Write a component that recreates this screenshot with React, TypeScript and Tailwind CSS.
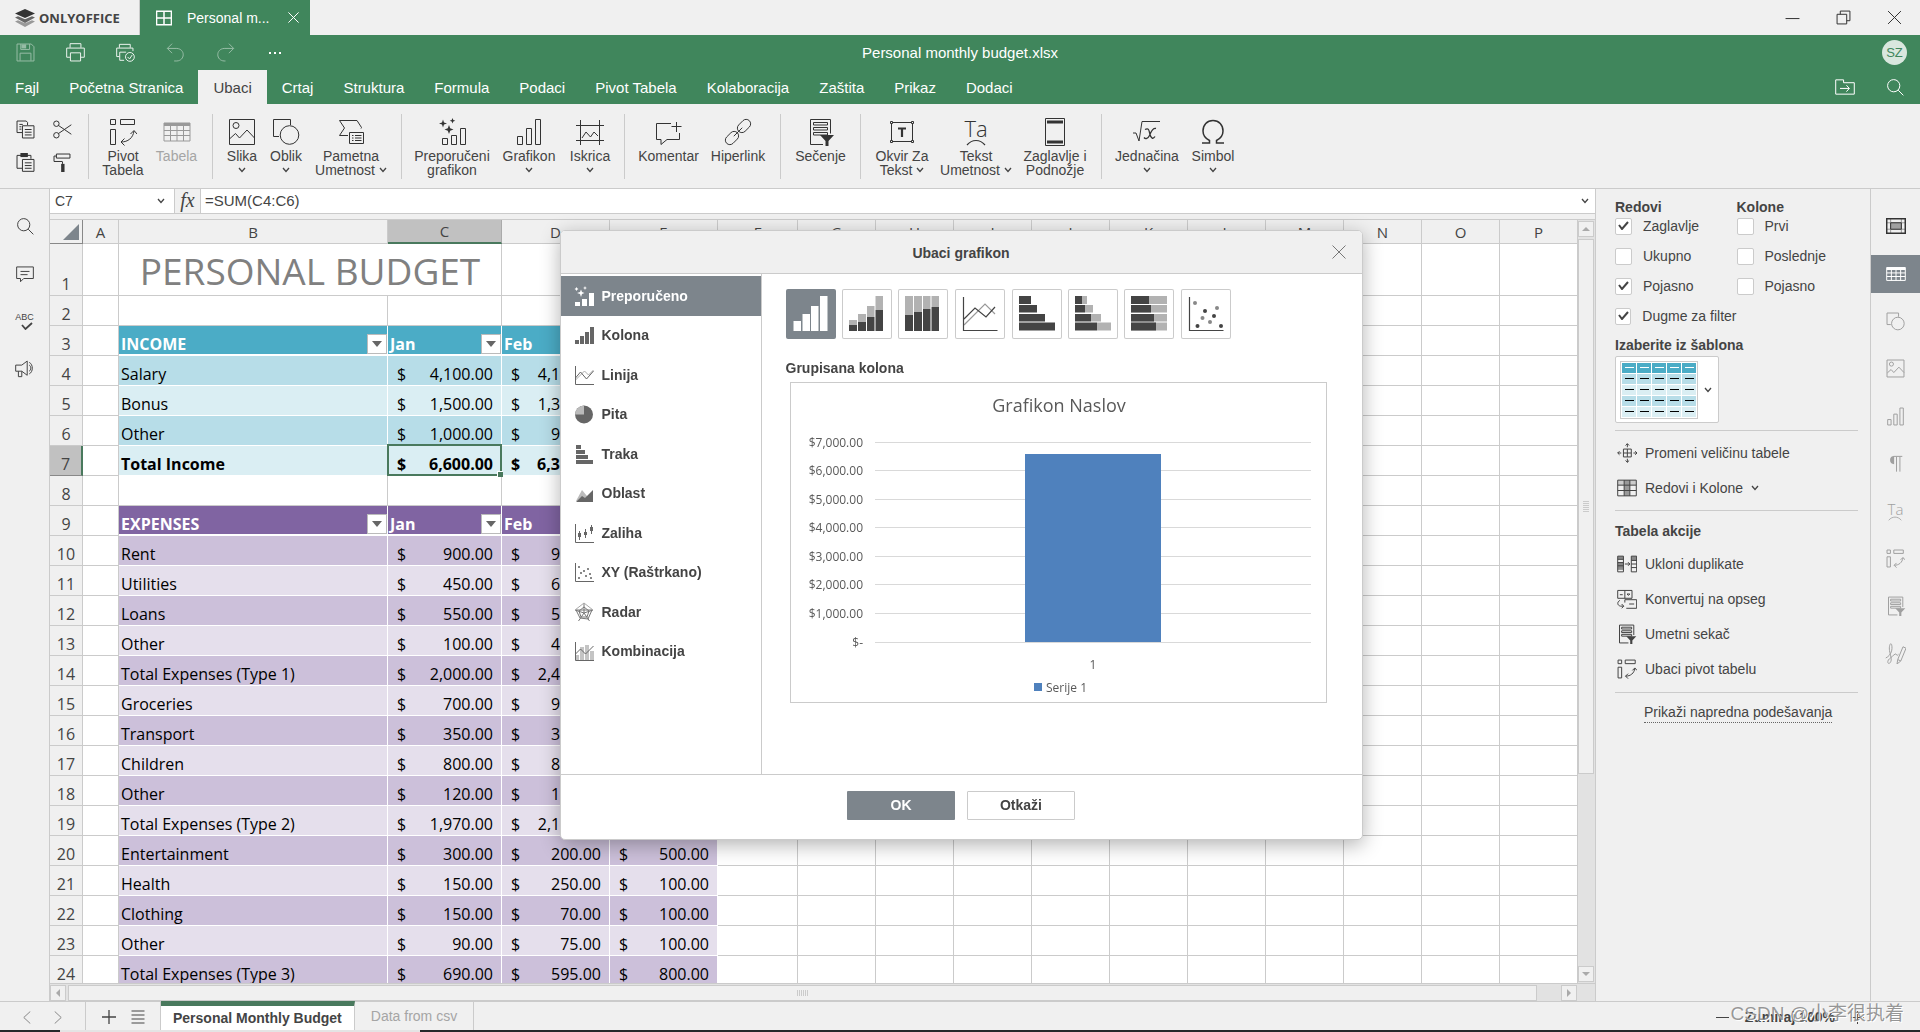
import { useState } from "react";
import type { ReactNode } from "react";

const UI_FONT = "font-['Liberation_Sans',Arial,sans-serif]";
const CELL_FONT = "font-['Open_Sans','Noto_Sans',sans-serif]";

/* ---------- icons ---------- */

interface IconProps {
    size?: number;
    box?: number;
    children: ReactNode;
}

const Icon = ({ size = 28, box = 28, children }: IconProps) => (
    <svg
        width={size}
        height={size}
        viewBox={`0 0 ${box} ${box}`}
        fill="none"
        stroke="currentColor"
        strokeWidth={1}
        className="shrink-0 [&_*]:[vector-effect:non-scaling-stroke]"
        aria-hidden="true"
    >
        {children}
    </svg>
);

const Chevron = () => (
    <svg width="8" height="6" viewBox="0 0 8 6" fill="none" stroke="#444" strokeWidth="1.3" aria-hidden="true">
        <path d="M1 1l3 3.5L7 1" />
    </svg>
);

const pivot = (
    <>
        <rect x="1.500" y="1.500" width="5" height="5" />
        <rect x="11.500" y="1.500" width="14" height="5" />
        <rect x="1.500" y="11.500" width="5" height="15" />
        <path d="M12 24c7 0 12-4 13-11M21.500 16l3.500-3.500 3 3.500M15.500 20.500L12 24l3.500 3.500" />
    </>
);
const tableGrid = (
    <>
        <rect x="1" y="5" width="26" height="18" />
        <path d="M1 6h26M1 7h26" strokeWidth="2" />
        <path d="M1 12.500h26M1 17.500h26M7.500 8v15M14 8v15M20.500 8v15" />
    </>
);
const image = (
    <>
        <rect x="1.500" y="1.500" width="25" height="25" />
        <circle cx="8" cy="7.500" r="3" />
        <path d="M2 20.500l5.500-5 4 4.500 7.500-8 7.500 8" />
    </>
);
const shape = (
    <>
        <path d="M7 18.500H1.500v-17h17v5.500" />
        <circle cx="17.500" cy="17" r="9.300" />
    </>
);
const smartArt = (
    <>
        <path d="M11 17.500H2.500l5-7.500-5-7.500h17.500l4.500 7-.500 1" />
        <rect x="12.500" y="14.500" width="14" height="11" />
        <path d="M15 17.500h1.500M18 17.500h6.500M15 20h1.500M18 20h6.500M15 22.500h1.500M18 22.500h6.500" />
    </>
);
const bars = (
    <>
        <rect x="2.500" y="18.500" width="5" height="8" />
        <rect x="11.500" y="10.500" width="5" height="16" />
        <rect x="20.500" y="1.500" width="5" height="25" />
    </>
);
const sparkBars = (
    <>
        <path d="M5 1.500l1 3 3 1-3 1-1 3-1-3-3-1 3-1zM11 7l1.200 3.300 3.300 1.200-3.300 1.200L11 16l-1.200-3.300-3.300-1.200 3.300-1.200zM14.500 0l.8 2 2 .8-2 .8-.8 2-.8-2-2-.8 2-.8z" fill="currentColor" stroke="none" />
        <rect x="4.500" y="20.500" width="5" height="6" />
        <rect x="13.500" y="17.500" width="5" height="9" />
        <rect x="22.500" y="10.500" width="5" height="16" />
    </>
);
const sparkline = (
    <>
        <path d="M4.500 2v25M23.500 2v25M0 7.500h28M0 22.500h28" />
        <path d="M6 20l4-6 4.500 5 3.500-5 4 4" />
    </>
);
const comment = (
    <>
        <path d="M16 5.500H1.500v16H6v5l6-5h12.500V15" />
        <path d="M21.500 4v10M16.500 8.500h10" />
    </>
);
const link = (
    <g transform="rotate(-45 14 14)">
        <rect x="-2" y="9.500" width="15" height="9" rx="4.500" />
        <rect x="15" y="9.500" width="15" height="9" rx="4.500" />
        <path d="M8 14h12" />
    </g>
);
const slicer = (
    <>
        <path d="M16 26.500H3.500v-25h20v14" />
        <path d="M6.500 4.500h14v2.500h-14zM6.500 9.500h14v2.500h-14zM6.500 14.500h14v2.500h-14z" />
        <path d="M13 17h14l-5.500 6v6h-3v-6z" fill="currentColor" stroke="none" />
    </>
);
const textBox = (
    <>
        <rect x="3.500" y="4.500" width="21" height="19" />
        <path d="M2.500 3.500h2v2h-2zM23.500 3.500h2v2h-2zM2.500 22.500h2v2h-2zM23.500 22.500h2v2h-2z" fill="#f0f0f0" />
        <path d="M10 10.500h8M14 10v9" strokeWidth="2.200" />
    </>
);
const headerFooter = (
    <>
        <rect x="4.500" y=".500" width="19" height="27" />
        <path d="M6 4h16M6 24h16" strokeWidth="3" />
    </>
);
const TextArt = ({ small }: { small?: boolean }) => (
    <span className="flex flex-col items-center font-['Open_Sans',sans-serif] font-light">
        <span className={small ? "text-[15px] leading-[14px]" : "text-[22px] leading-[21px]"}>Ta</span>
        <svg width={small ? 14 : 20} height={small ? 5 : 7} viewBox="0 0 20 7" fill="none" stroke="currentColor" strokeWidth="1.2">
            <path d="M1 6c5-6 13-6 18 0" />
        </svg>
    </span>
);
const equation = (
    <>
        <path d="M0 15h3l3 8L9 3.500h18" />
        <path d="M12 11.500c4-2 4 1 5 5s3 5 5 2M23 10.500c-4-1-5 4-6.500 7s-4 4-5.500 2" strokeWidth="1.300" />
    </>
);
const omega = (
    <path d="M3 25h7.500v-2.500C5.500 20 4 17 4 13 4 7 8 2.500 14 2.500S24 7 24 13c0 4-1.500 7-6.500 9.500V25H25" strokeWidth="1.500" />
);
const search = (
    <>
        <circle cx="12" cy="12" r="9.500" />
        <path d="M19 19l8 8" />
    </>
);
const copy = (
    <>
        <path d="M9 18.500H1.500v-17H15l2 2v4M5 6.500h5M5 10h3M5 13.500h3" />
        <rect x="9.500" y="8.500" width="17" height="18" />
        <path d="M13 14h10M13 18h10M13 22h10" />
    </>
);
const paste = (
    <>
        <path d="M9 22.500H1.500v-19H22v5" />
        <path d="M6.500 0h11v6h-11z" fill="currentColor" stroke="none" />
        <rect x="9.500" y="9.500" width="17" height="17.500" />
        <path d="M13 14.500h10M13 18.500h10M13 22.500h10" />
    </>
);
const cut = (
    <>
        <circle cx="5" cy="5.500" r="4" />
        <circle cx="5" cy="22.500" r="4" />
        <path d="M8 8l19 13M8 20L27 7" />
    </>
);
const painter = (
    <>
        <path d="M5 1.500h20v6H5zM5 4.500H1.500v8H14" />
        <path d="M14 13v3" />
        <path d="M12 16h5v12h-5z" fill="currentColor" stroke="none" />
    </>
);
const save = (
    <>
        <path d="M1.500 1.500h21l4 4v21h-25z" />
        <path d="M7 1.500v8h13v-8M6 26v-11h16v11" />
        <path d="M8 2h7v6H8z" fill="currentColor" stroke="none" />
    </>
);
const print = (
    <>
        <path d="M6 7V1h16v6M6 21H1V7.500h26V21h-5" />
        <path d="M6.500 14.500h15v12h-15z" />
    </>
);
const quickPrint = (
    <>
        <path d="M5 7V2h16v5M5 20H1V7.500h24V12M12 25.500H5.500v-12H15" />
        <circle cx="20.500" cy="20.500" r="6.500" />
        <path d="M17 20.500l3 3 4-6" />
    </>
);
const undo = <path d="M9 1L2 8l7 7M2 8h14c13 1 12 18 0 18.500h-4" />;
const redo = <path d="M19 1l7 7-7 7M26 8H12C-1 9 0 26 12 26.500h2" />;
const cellSettings = (
    <>
        <path d="M1 9.500h26M1 18.500h26M6.500 4v20M21.500 4v20" stroke="#999" />
        <rect x="1" y="4" width="26" height="20" strokeWidth="1.500" />
        <path d="M6.500 9.500h15v9h-15z" fill="#a0a0a0" />
    </>
);
const paragraph = (
    <>
        <path d="M12 3a6 6 0 100 12z" fill="currentColor" stroke="none" />
        <path d="M11 3.500h13M15.500 4v22M20.500 4v22" />
    </>
);
const signature = (
    <>
        <path d="M1 20c8-4 9-12 8-17s-4 0-3 7 4 12 1 16-5-2-1-5 8-8 9-6 1 2 3 0" />
        <path d="M17 22l7-17 4 2-7 17-5 4zM17 22l4 2" />
    </>
);
const resize = (
    <>
        <path d="M9 8.500h11v11H9zM14.500 8.500v11M9 14h11" />
        <path d="M14.500 6V1M12 3.500L14.500 1 17 3.500M14.500 22v5M12 24.500l2.500 2.500 2.500-2.500M6 14H1M3.500 11.500L1 14l2.500 2.500M23 14h5M25.500 11.500L28 14l-2.500 2.500" />
    </>
);
const rowsCols = (
    <>
        <path d="M1 3h26v7H1z" fill="#ccc" stroke="none" />
        <path d="M10 3h8v22h-8z" fill="#999" stroke="none" />
        <rect x="1" y="3" width="26" height="22" />
        <path d="M1 10h26M1 17.500h26M10 3v22M18 3v22" />
    </>
);
const dedupe = (
    <>
        <path d="M1 3h8v4H1zM1 12h8v8H1zM20 3h8v6h-8z" fill="#888" stroke="none" />
        <path d="M1 3h8v22H1zM1 7.500h8M1 12h8M1 16.500h8M1 21h8M20 3h7.500v22H20zM20 9h8M20 14h8M20 19h8" />
        <path d="M11 14h7M15.500 11.500L18 14l-2.500 2.500" />
    </>
);
const toRange = (
    <>
        <path d="M1 2h20v11H1zM11 2v11M4 8h4M14 7h4l-2 2z" />
        <path d="M11 19v-4h16.500v12H13M17 21h7M4 16c-4 2-4 7 1 8h4M6.500 21l3 3-3 3" />
    </>
);

/* chart glyphs, drawn on a 20px box */
const navIcons: Record<string, ReactNode> = {
    Preporučeno: (
        <g fill="currentColor" stroke="none">
            <path d="M1 16h5v4H1zM8 13h5v7H8zM15 7h5v13h-5z" />
            <path d="M7 3.500l1 2.500 2.500 1L8 8l-1 3-1-3-3-1 3-1zM2.500 1l.7 1.300 1.300.7-1.300.7L2.500 5l-.7-1.300L.5 3l1.300-.7zM11 0l.6 1.400L13 2l-1.400.6L11 4l-.6-1.400L9 2l1.400-.6z" />
        </g>
    ),
    Kolona: <path d="M1 15h4v4H1zM6 11h4v8H6zM11 7h4v12h-4zM16 2h4v17h-4z" fill="#666" stroke="none" />,
    Linija: (
        <>
            <path d="M1.500 15l9-9 4 4 5-5" stroke="#aaa" />
            <path d="M1.500 13l5-6 6 7 7-8" stroke="#666" />
            <path d="M1.500 1v18.500h19" stroke="#666" />
        </>
    ),
    Pita: (
        <g stroke="none">
            <circle cx="10" cy="10.500" r="9" fill="#666" />
            <path d="M10 10.500V1.500a9 9 0 00-9 9z" fill="#bbb" />
        </g>
    ),
    Traka: <path d="M2 1h5v4H2zM2 6h9v4H2zM2 11h12v4H2zM2 16h17v4H2z" fill="#666" stroke="none" />,
    Oblast: (
        <g stroke="none">
            <path d="M2 18L8 7l5 6v5z" fill="#bbb" />
            <path d="M2 19l6-6 3 2 8-8v12z" fill="#666" />
        </g>
    ),
    Zaliha: (
        <>
            <path d="M1.500 1v18.500h19M5.500 8v9M11.500 6v9M17.500 2v9" stroke="#666" />
            <path d="M4 10h3v4H4zM10 9h3v3h-3zM16 4h3v4h-3z" fill="#666" stroke="none" />
        </>
    ),
    "XY (Raštrkano)": (
        <>
            <path d="M1.500 1v18.500h19" stroke="#666" />
            <path d="M4 4h2v2H4zM13 6h2v2h-2zM9 8h2v2H9zM15 11h2v2h-2zM6 10h2v2H6zM11 13h2v2h-2zM4 15h2v2H4zM16 15h2v2h-2z" fill="#888" stroke="none" />
        </>
    ),
    Radar: (
        <g stroke="#777">
            <path d="M10 1v10M1 8l9 3 9-3M4.500 19l5.500-8 5.500 8" />
            <path d="M10 1l9 7M1 8l9-7" stroke="#aaa" />
            <path d="M10 5l5 4-2 6H7L5 9zM2 8h16l-4 9-8-1z" />
        </g>
    ),
    Kombinacija: (
        <>
            <path d="M2 14h3v5H2zM6 6h4v13H6zM11 4h4v15h-4zM16 10h4v9h-4z" fill="#c4c4c4" stroke="none" />
            <path d="M1.500 13l5-5 5 5 8-8M1.500 1v18.500h19" stroke="#666" />
        </>
    ),
};

/* chart variants, drawn on the full 50px button */
const variantGroups: { name: string; art: ReactNode }[][] = [
    [
        { name: "Grupisana kolona", art: <path d="M7.500 32h7.500v10H7.500zM16.500 25h7.500v17h-7.500zM25 17h7.500v25H25zM34 7h7.500v35H34z" fill="#fff" /> },
        {
            name: "Složena kolona",
            art: (
                <>
                    <path d="M7 31h8v5H7zM16 25h8v8h-8zM25 17h7.500v11H25zM33.500 7H41v14h-7.500z" fill="#b2b2b2" />
                    <path d="M7 36h8v6H7zM16 33h8v9h-8zM25 28h7.500v14H25zM33.500 21H41v21h-7.500z" fill="#444" />
                </>
            ),
        },
        {
            name: "100% složena kolona",
            art: (
                <>
                    <path d="M7 7h8v19H7zM16 7h8v16h-8zM25 7h7.500v13H25zM33.500 7H41v11h-7.500z" fill="#b2b2b2" />
                    <path d="M7 26h8v16H7zM16 23h8v19h-8zM25 20h7.500v22H25zM33.500 18H41v24h-7.500z" fill="#444" />
                </>
            ),
        },
    ],
    [
        {
            name: "Linija",
            art: (
                <g fill="none" strokeWidth="1.200">
                    <path d="M9 36l21-21 10 10" stroke="#999" />
                    <path d="M9 30l11-11 11 9 9-10M8.500 8v33.500h34" stroke="#444" />
                </g>
            ),
        },
    ],
    [
        { name: "Grupisana traka", art: <path d="M7 7h12v8H7zM7 16h18v7.500H7zM7 25h26v7.500H7zM7 33.500h36v8H7z" fill="#444" /> },
        {
            name: "Složena traka",
            art: (
                <>
                    <path d="M14 7h5v8h-5zM17 16h8v7.500h-8zM23 25h10v7.500H23zM29 33.500h14v8H29z" fill="#b2b2b2" />
                    <path d="M7 7h7v8H7zM7 16h10v7.500H7zM7 25h16v7.500H7zM7 33.500h22v8H7z" fill="#444" />
                </>
            ),
        },
        {
            name: "100% složena traka",
            art: (
                <>
                    <path d="M7 7h36v8H7zM7 16h36v7.500H7zM7 25h36v7.500H7zM7 33.500h36v8H7z" fill="#b2b2b2" />
                    <path d="M7 7h18v8H7zM7 16h20v7.500H7zM7 25h23v7.500H7zM7 33.500h25v8H7z" fill="#444" />
                </>
            ),
        },
    ],
    [
        {
            name: "Raštrkano",
            art: (
                <>
                    <path d="M8.500 8v33.500h34" fill="none" stroke="#444" strokeWidth="1.200" />
                    <g fill="#888">
                        <circle cx="14" cy="14" r="2" />
                        <circle cx="36" cy="19" r="2" />
                        <circle cx="21.500" cy="29" r="2" />
                        <circle cx="29" cy="33" r="2" />
                    </g>
                    <g fill="#444">
                        <circle cx="24" cy="22" r="2" />
                        <circle cx="33" cy="27" r="2" />
                        <circle cx="16.500" cy="37" r="2" />
                        <circle cx="40" cy="37" r="2" />
                    </g>
                </>
            ),
        },
    ],
];

/* ---------- title bar and ribbon ---------- */

const TitleBar = () => (
    <header className="flex h-[35px] items-center justify-between bg-[#f0f0f0]">
        <div className="flex h-full items-center">
            <div className="flex h-full w-[140px] items-center gap-[4px] border-r border-[#cbcbcb] pl-[15px]">
                <svg width="20" height="18" viewBox="0 0 20 18" aria-hidden="true">
                    <path d="M0 12.500l3-1.300 7 3 7-3 3 1.300L10 18z" fill="#999" />
                    <path d="M0 8.500l3-1.300 7 3 7-3 3 1.300L10 14z" fill="#666" />
                    <path d="M10 0l10 4.500L10 9 0 4.500z" fill="#333" />
                </svg>
                <span className="font-['Open_Sans',sans-serif] text-[13px] font-bold leading-5 text-[#444]">ONLYOFFICE</span>
            </div>
            <div className="flex h-full w-[170px] items-center bg-[#40865c] pl-4 text-white">
                <Icon size={16}>
                    <path d="M1 2h26v24H1zM14 2v24M1 14h26" strokeWidth="1.500" />
                </Icon>
                <span className="ml-[15px] w-[93px] text-[14px] leading-5">Personal m...</span>
                <button aria-label="Zatvori karticu" className="flex items-center pl-2">
                    <Icon size={11}>
                        <path d="M1 1l26 26M27 1L1 27" />
                    </Icon>
                </button>
            </div>
        </div>
        <div className="flex gap-9 pr-[18px] text-[#333]">
            <button aria-label="Umanji">
                <Icon size={15}><path d="M1 16h26" /></Icon>
            </button>
            <button aria-label="Vrati">
                <Icon size={15}><path d="M2 8h18v18H2zM8 8V2h18v18h-6" /></Icon>
            </button>
            <button aria-label="Zatvori">
                <Icon size={15}><path d="M2 2l24 24M26 2L2 26" /></Icon>
            </button>
        </div>
    </header>
);

const quickActions = [
    { name: "Sačuvaj", art: save, dim: true },
    { name: "Štampaj", art: print, dim: false },
    { name: "Brza štampa", art: quickPrint, dim: false },
    { name: "Poništi", art: undo, dim: true },
    { name: "Ponovi", art: redo, dim: true },
];

const menuTabs = [
    "Fajl", "Početna Stranica", "Ubaci", "Crtaj", "Struktura", "Formula", "Podaci",
    "Pivot Tabela", "Kolaboracija", "Zaštita", "Prikaz", "Dodaci",
];

const MenuBar = () => (
    <div className="bg-[#40865c] text-white">
        <div className="grid h-[35px] grid-cols-[1fr_auto_1fr] items-center">
            <div className="flex items-center gap-[30px] pl-4">
                {quickActions.map((a) => (
                    <button key={a.name} aria-label={a.name} className={a.dim ? "w-5 opacity-45" : "w-5 opacity-90"}>
                        <Icon size={19}>{a.art}</Icon>
                    </button>
                ))}
                <button aria-label="Još" className="flex gap-[3px] pl-[3px]">
                    <i className="size-[2px] bg-white" />
                    <i className="size-[2px] bg-white" />
                    <i className="size-[2px] bg-white" />
                </button>
            </div>
            <span className="text-[15px] leading-5">Personal monthly budget.xlsx</span>
            <div className="flex justify-end pr-[13px]">
                <span className="flex size-[25px] items-center justify-center rounded-full bg-[#d9e7de] text-[13px] text-[#40865c]">SZ</span>
            </div>
        </div>
        <div className="flex h-[34px] items-center justify-between">
            <nav className="flex h-full">
                {menuTabs.map((tab) => (
                    <button
                        key={tab}
                        className={
                            tab === "Ubaci"
                                ? "h-full bg-[#f0f0f0] px-[15px] pt-[2px] text-[15px] leading-5 text-[#444]"
                                : "h-full px-[15px] pt-[2px] text-[15px] leading-5"
                        }
                    >
                        {tab}
                    </button>
                ))}
            </nav>
            <div className="flex items-center gap-[31px] pr-4">
                <button aria-label="Otvori lokaciju fajla">
                    <Icon size={20}><path d="M1 4h11v4h15v16H1zM7 16h13M16 11.500l4 4.500-4 4.500" /></Icon>
                </button>
                <button aria-label="Pretraga"><Icon size={18}>{search}</Icon></button>
            </div>
        </div>
    </div>
);

interface Tool {
    lines: string[];
    art: ReactNode;
    width: string;
    menu?: boolean;
    off?: boolean;
}

const toolGroups: Tool[][] = [
    [
        { lines: ["Pivot", "Tabela"], art: <Icon>{pivot}</Icon>, width: "w-[52px]" },
        { lines: ["Tabela"], art: <Icon>{tableGrid}</Icon>, width: "w-[55px]", off: true },
    ],
    [
        { lines: ["Slika"], art: <Icon>{image}</Icon>, width: "w-[42px]", menu: true },
        { lines: ["Oblik"], art: <Icon>{shape}</Icon>, width: "w-[46px]", menu: true },
        { lines: ["Pametna", "Umetnost"], art: <Icon>{smartArt}</Icon>, width: "w-[84px]", menu: true },
    ],
    [
        { lines: ["Preporučeni", "grafikon"], art: <Icon>{sparkBars}</Icon>, width: "w-[84px]" },
        { lines: ["Grafikon"], art: <Icon>{bars}</Icon>, width: "w-[70px]", menu: true },
        { lines: ["Iskrica"], art: <Icon>{sparkline}</Icon>, width: "w-[52px]", menu: true },
    ],
    [
        { lines: ["Komentar"], art: <Icon>{comment}</Icon>, width: "w-[71px]" },
        { lines: ["Hiperlink"], art: <Icon>{link}</Icon>, width: "w-[68px]" },
    ],
    [{ lines: ["Sečenje"], art: <Icon>{slicer}</Icon>, width: "w-[63px]" }],
    [
        { lines: ["Okvir Za", "Tekst"], art: <Icon>{textBox}</Icon>, width: "w-[66px]", menu: true },
        { lines: ["Tekst", "Umetnost"], art: <TextArt />, width: "w-[82px]", menu: true },
        { lines: ["Zaglavlje i", "Podnožje"], art: <Icon>{headerFooter}</Icon>, width: "w-[76px]" },
    ],
    [
        { lines: ["Jednačina"], art: <Icon>{equation}</Icon>, width: "w-[74px]", menu: true },
        { lines: ["Simbol"], art: <Icon>{omega}</Icon>, width: "w-[58px]", menu: true },
    ],
];

const ToolButton = ({ tool }: { tool: Tool }) => (
    <button
        disabled={tool.off}
        className={`flex ${tool.width} flex-col items-center whitespace-nowrap text-[14px] leading-[14px] ${tool.off ? "text-[#a5a5a5]" : "text-[#444]"}`}
    >
        <span className={`flex h-[35px] items-center ${tool.off ? "text-[#999]" : "text-[#333]"}`}>{tool.art}</span>
        <span>{tool.lines[0]}</span>
        <span className="flex h-[14px] items-center gap-1">
            {tool.lines[1]}
            {tool.menu && <Chevron />}
        </span>
    </button>
);

const Ribbon = () => (
    <div className="flex h-[85px] items-start border-b border-[#cbcbcb] bg-[#f0f0f0] pt-[10px]">
        <div className="grid w-20 grid-cols-2 gap-x-[2px] gap-y-[14px] pl-2 pt-[6px] text-[#333]">
            <button aria-label="Kopiraj" className="flex justify-center"><Icon size={19}>{copy}</Icon></button>
            <button aria-label="Iseci" className="flex justify-center"><Icon size={19}>{cut}</Icon></button>
            <button aria-label="Nalepi" className="flex justify-center"><Icon size={19}>{paste}</Icon></button>
            <button aria-label="Kopiraj stil" className="flex justify-center"><Icon size={19}>{painter}</Icon></button>
        </div>
        {toolGroups.map((group, i) => (
            <div key={i} className="flex">
                <div className="mx-2 h-[65px] w-px bg-[#cbcbcb]" />
                {group.map((tool) => (
                    <ToolButton key={tool.lines.join(" ")} tool={tool} />
                ))}
            </div>
        ))}
    </div>
);

/* ---------- sheet ---------- */

const FormulaBar = () => (
    <div className="flex h-[25px] shrink-0 border-b border-[#cbcbcb] bg-white text-[14px] text-[#444]">
        <div className="flex w-[125px] items-center border-r border-[#cbcbcb] pr-[9px]">
            <input aria-label="Ime ćelije" defaultValue="C7" className="w-full min-w-0 flex-1 pl-[5px] outline-none" />
            <Chevron />
        </div>
        <button aria-label="Ubaci funkciju" className="w-[26px] border-r border-[#cbcbcb] bg-[#f0f0f0] pb-[2px] font-['Liberation_Serif',serif] text-[20px] italic leading-5">
            fx
        </button>
        <input aria-label="Formula" defaultValue="=SUM(C4:C6)" className="min-w-0 flex-1 pl-1 text-[15px] outline-none" />
        <button aria-label="Proširi" className="px-[6px]"><Chevron /></button>
    </div>
);

const columns = [
    { id: "A", width: "w-[36px]" },
    { id: "B", width: "w-[269px]" },
    { id: "C", width: "w-[114px]" },
    { id: "D", width: "w-[108px]" },
    { id: "E", width: "w-[108px]" },
    { id: "F", width: "w-[80px]" },
    { id: "G", width: "w-[78px]" },
    { id: "H", width: "w-[78px]" },
    { id: "I", width: "w-[78px]" },
    { id: "J", width: "w-[78px]" },
    { id: "K", width: "w-[78px]" },
    { id: "L", width: "w-[78px]" },
    { id: "M", width: "w-[78px]" },
    { id: "N", width: "w-[78px]" },
    { id: "O", width: "w-[78px]" },
    { id: "P", width: "" },
];

interface SheetRow {
    kind: "title" | "blank" | "head" | "body";
    cells?: string[];
    fill?: string;
    bold?: boolean;
}

const TEAL = "bg-[#4bacc6]";
const TEAL_MID = "bg-[#b7dde8]";
const TEAL_LIGHT = "bg-[#daeef3]";
const PURPLE = "bg-[#8064a2]";
const PURPLE_MID = "bg-[#ccc0da]";
const PURPLE_LIGHT = "bg-[#e5dfec]";

const sheet: SheetRow[] = [
    { kind: "title" },
    { kind: "blank" },
    { kind: "head", cells: ["INCOME", "Jan", "Feb"], fill: TEAL },
    { kind: "body", cells: ["Salary", "4,100.00", "4,100.00"], fill: TEAL_MID },
    { kind: "body", cells: ["Bonus", "1,500.00", "1,300.00"], fill: TEAL_LIGHT },
    { kind: "body", cells: ["Other", "1,000.00", "900.00"], fill: TEAL_MID },
    { kind: "body", cells: ["Total Income", "6,600.00", "6,300.00"], fill: TEAL_LIGHT, bold: true },
    { kind: "blank" },
    { kind: "head", cells: ["EXPENSES", "Jan", "Feb"], fill: PURPLE },
    { kind: "body", cells: ["Rent", "900.00", "900.00"], fill: PURPLE_MID },
    { kind: "body", cells: ["Utilities", "450.00", "600.00"], fill: PURPLE_LIGHT },
    { kind: "body", cells: ["Loans", "550.00", "500.00"], fill: PURPLE_MID },
    { kind: "body", cells: ["Other", "100.00", "400.00"], fill: PURPLE_LIGHT },
    { kind: "body", cells: ["Total Expenses (Type 1)", "2,000.00", "2,400.00"], fill: PURPLE_MID },
    { kind: "body", cells: ["Groceries", "700.00", "900.00"], fill: PURPLE_LIGHT },
    { kind: "body", cells: ["Transport", "350.00", "300.00"], fill: PURPLE_MID },
    { kind: "body", cells: ["Children", "800.00", "800.00"], fill: PURPLE_LIGHT },
    { kind: "body", cells: ["Other", "120.00", "100.00"], fill: PURPLE_MID },
    { kind: "body", cells: ["Total Expenses (Type 2)", "1,970.00", "2,100.00"], fill: PURPLE_LIGHT },
    { kind: "body", cells: ["Entertainment", "300.00", "200.00", "500.00"], fill: PURPLE_MID },
    { kind: "body", cells: ["Health", "150.00", "250.00", "100.00"], fill: PURPLE_LIGHT },
    { kind: "body", cells: ["Clothing", "150.00", "70.00", "100.00"], fill: PURPLE_MID },
    { kind: "body", cells: ["Other", "90.00", "75.00", "100.00"], fill: PURPLE_LIGHT },
    { kind: "body", cells: ["Total Expenses (Type 3)", "690.00", "595.00", "800.00"], fill: PURPLE_MID },
];

const FilterButton = () => (
    <button aria-label="Filter" className="flex size-5 items-center justify-center border border-[#bbb] bg-white">
        <svg width="10" height="6" viewBox="0 0 10 6" aria-hidden="true"><path d="M0 0h10L5 6z" fill="#666" /></svg>
    </button>
);

const DataCell = ({ row, index, selected }: { row: SheetRow; index: number; selected: boolean }) => {
    const value = row.cells?.[index];

    if (row.kind === "head") {
        return (
            <td className={`border-b-2 border-r border-white p-0 align-bottom text-white ${row.fill}`}>
                <div className="flex h-5 items-center justify-between pl-[2px] font-bold">
                    <span>{value}</span>
                    <FilterButton />
                </div>
            </td>
        );
    }

    return (
        <td className={`relative border-b border-r border-white p-0 align-bottom ${row.fill} ${row.bold ? "font-bold" : ""}`}>
            {index === 0 ? (
                <div className="pl-[2px]">{value}</div>
            ) : (
                <div className="flex justify-between pl-[9px] pr-2">
                    <span>{value && "$"}</span>
                    <span>{value}</span>
                </div>
            )}
            {selected && (
                <div className="absolute -inset-x-px -bottom-px -top-[2px] z-10 border-2 border-[#49795d]">
                    <i className="absolute -bottom-[3px] -right-[3px] size-[6px] border-l border-t border-white bg-[#49795d]" />
                </div>
            )}
        </td>
    );
};

const Sheet = () => (
    <table className={`w-full table-fixed border-separate border-spacing-0 bg-white ${CELL_FONT} text-[16px] leading-[22px] text-black`}>
        <colgroup>
            <col className="w-[33px]" />
            {columns.map((c) => (
                <col key={c.id} className={c.width} />
            ))}
        </colgroup>
        <thead>
            <tr className="h-6 bg-[#f0f0f0] text-[15px] leading-[22px] text-[#444]">
                <th className="border-b border-r border-[#888] p-0 align-bottom">
                    <svg width="16" height="16" viewBox="0 0 16 16" className="mb-[3px] ml-[13px] block" aria-hidden="true">
                        <path d="M16 0v16H0z" fill="#7d858c" />
                    </svg>
                </th>
                {columns.map((c) => (
                    <th
                        key={c.id}
                        className={
                            c.id === "C"
                                ? "border-b-2 border-r border-b-[#49795d] border-r-[#aaa] bg-[#c1c1c1] p-0 font-normal"
                                : "border-b border-r border-[#cbcbcb] p-0 font-normal"
                        }
                    >
                        {c.id}
                    </th>
                ))}
            </tr>
        </thead>
        <tbody>
            {sheet.map((row, i) => {
                const filled = row.kind === "head" || row.kind === "body";
                return (
                    <tr key={i} className={row.kind === "title" ? "h-[52px]" : "h-[30px]"}>
                        <th
                            className={
                                i === 6
                                    ? "border-b border-r-2 border-b-[#888] border-r-[#49795d] bg-[#c1c1c1] p-0 align-bottom font-normal text-[#444]"
                                    : "border-b border-r border-[#cbcbcb] bg-[#f0f0f0] p-0 align-bottom font-normal text-[#444]"
                            }
                        >
                            {i + 1}
                        </th>
                        {columns.map((c, ci) => {
                            if (row.kind === "title" && c.id === "B") {
                                return (
                                    <td key={c.id} colSpan={2} className="border-b border-r border-[#cbcbcb] p-0 pt-[2px] text-center text-[37px] leading-[48px] text-[#808080]">
                                        PERSONAL BUDGET
                                    </td>
                                );
                            }
                            if (row.kind === "title" && c.id === "C") return null;
                            if (filled && ci >= 1 && ci <= 4) {
                                return <DataCell key={c.id} row={row} index={ci - 1} selected={i === 6 && c.id === "C"} />;
                            }
                            return <td key={c.id} className="border-b border-r border-[#cbcbcb] p-0" />;
                        })}
                    </tr>
                );
            })}
        </tbody>
    </table>
);

const ScrollArrow = ({ name, path }: { name: string; path: string }) => (
    <button aria-label={name} className="flex size-4 shrink-0 items-center justify-center border border-[#cbcbcb] bg-[#f0f0f0]">
        <svg width="8" height="8" viewBox="0 0 8 8" aria-hidden="true"><path d={path} fill="#aaa" /></svg>
    </button>
);

const SheetArea = () => (
    <main className="flex min-w-0 flex-1 flex-col border-x border-[#cbcbcb]">
        <FormulaBar />
        <div className="h-[6px] shrink-0 border-b border-[#cbcbcb] bg-[#f0f0f0]" />
        <div className="flex min-h-0 flex-1">
            <div className="min-w-0 flex-1 overflow-hidden">
                <Sheet />
            </div>
            <div className="flex w-[17px] flex-col gap-[2px] bg-[#e2e2e2] py-[1px]">
                <ScrollArrow name="Gore" path="M4 2l4 4H0z" />
                <div className="flex flex-1 pb-[190px]">
                    <div className="flex w-4 flex-col items-center justify-center gap-[1px] border border-[#cbcbcb] bg-[#f0f0f0]">
                        {[0, 1, 2, 3, 4, 5].map((n) => <i key={n} className="h-px w-[6px] bg-[#cbcbcb]" />)}
                    </div>
                </div>
                <ScrollArrow name="Dole" path="M0 2h8L4 6z" />
            </div>
        </div>
        <div className="flex h-[18px] shrink-0 items-center gap-[2px] border-t border-[#cbcbcb] bg-[#e2e2e2] pr-[18px]">
            <ScrollArrow name="Levo" path="M6 0v8L2 4z" />
            <div className="mr-[22px] flex h-4 flex-1 items-center justify-center gap-[1px] border border-[#cbcbcb] bg-[#f0f0f0]">
                {[0, 1, 2, 3, 4, 5].map((n) => <i key={n} className="h-[6px] w-px bg-[#cbcbcb]" />)}
            </div>
            <ScrollArrow name="Desno" path="M2 0v8l4-4z" />
        </div>
    </main>
);

/* ---------- side bars ---------- */

const LeftBar = () => (
    <aside className="w-[49px] shrink-0 bg-[#f0f0f0] pt-[18px] text-[#444]">
        <div className="flex h-[181px] flex-col items-center justify-between">
            <button aria-label="Pretraga" className="flex h-[38px] items-center"><Icon size={18}>{search}</Icon></button>
            <button aria-label="Komentari" className="flex h-[38px] items-center">
                <Icon size={18}><path d="M1 3h26v18H12l-5 5v-5H1zM7 10h14M7 15h11" /></Icon>
            </button>
            <button aria-label="Provera pravopisa" className="flex h-[38px] flex-col items-center justify-center">
                <span className="font-['Liberation_Sans',sans-serif] text-[9px] leading-[9px]">ABC</span>
                <svg width="12" height="8" viewBox="0 0 12 8" fill="none" stroke="#444" strokeWidth="1.800" className="ml-[6px]" aria-hidden="true">
                    <path d="M1 3l3.500 4L11 1" />
                </svg>
            </button>
            <button aria-label="Povratne informacije" className="flex h-[38px] items-center">
                <Icon size={19}><path d="M1 9h9l8-6v21l-8-6H1zM5 18v8h5v-8M21 5c6 3 6 14 0 17M21 9c3 2 3 7 0 9" /></Icon>
            </button>
        </div>
    </aside>
);

const CheckRow = ({ id, label, checked }: { id: string; label: string; checked?: boolean }) => (
    <div className="relative flex h-[18px] items-center gap-[11px] whitespace-nowrap">
        <input
            id={id}
            type="checkbox"
            defaultChecked={checked}
            className="peer size-[17px] appearance-none rounded-[2px] border border-[#cbcbcb] bg-white"
        />
        <svg
            width="11"
            height="9"
            viewBox="0 0 11 9"
            fill="none"
            stroke="#444"
            strokeWidth="2"
            className="pointer-events-none absolute left-[3px] top-1 hidden peer-checked:block"
            aria-hidden="true"
        >
            <path d="M1 4l3 4 6-7" />
        </svg>
        <label htmlFor={id}>{label}</label>
    </div>
);

const PanelAction = ({ art, label, menu }: { art: ReactNode; label: string; menu?: boolean }) => (
    <button className="flex h-[35px] items-center gap-2 pl-[2px]">
        <Icon size={20}>{art}</Icon>
        <span>{label}</span>
        {menu && <Chevron />}
    </button>
);

const templateRows = [TEAL, TEAL_MID, TEAL_LIGHT, TEAL_MID, TEAL_LIGHT];

const TablePanel = () => (
    <aside className="w-[274px] shrink-0 bg-[#f0f0f0] pl-[19px] pr-[12px] pt-[10px] text-[14px] leading-4 text-[#444]">
        <div className="grid grid-cols-2 gap-y-3">
            <div className="-mb-[10px] font-bold">Redovi</div>
            <div className="-mb-[10px] font-bold">Kolone</div>
            <CheckRow id="row-header" label="Zaglavlje" checked />
            <CheckRow id="col-first" label="Prvi" />
            <CheckRow id="row-total" label="Ukupno" />
            <CheckRow id="col-last" label="Poslednje" />
            <CheckRow id="row-banded" label="Pojasno" checked />
            <CheckRow id="col-banded" label="Pojasno" />
            <CheckRow id="filter-button" label="Dugme za filter" checked />
        </div>
        <div className="mt-3 font-bold">Izaberite iz šablona</div>
        <button aria-label="Šablon tabele" className="mt-[3px] flex h-[67px] w-[104px] items-center gap-[6px] rounded-[2px] border border-[#cbcbcb] bg-white pl-1">
            <span className="grid grid-cols-5 gap-px border border-[#cbcbcb] p-px">
                {templateRows.map((fill, r) =>
                    [0, 1, 2, 3, 4].map((c) => (
                        <span key={`${r}-${c}`} className={`flex h-[10px] w-[14px] items-center justify-center ${fill}`}>
                            <i className={`h-px w-[9px] ${r === 0 ? "bg-white" : "bg-black"}`} />
                        </span>
                    ))
                )}
            </span>
            <Chevron />
        </button>
        <hr className="mb-1 mt-[7px] border-[#cbcbcb]" />
        <PanelAction art={resize} label="Promeni veličinu tabele" />
        <PanelAction art={rowsCols} label="Redovi i Kolone" menu />
        <hr className="mt-[5px] border-[#cbcbcb]" />
        <div className="mb-[7px] mt-3 font-bold">Tabela akcije</div>
        <PanelAction art={dedupe} label="Ukloni duplikate" />
        <PanelAction art={toRange} label="Konvertuj na opseg" />
        <PanelAction art={slicer} label="Umetni sekač" />
        <PanelAction art={pivot} label="Ubaci pivot tabelu" />
        <hr className="mt-[6px] border-[#cbcbcb]" />
        <a href="#napredno" className="ml-[29px] mt-[11px] inline-block border-b border-dotted border-[#666] pb-[2px]">
            Prikaži napredna podešavanja
        </a>
    </aside>
);

const stripItems: { name: string; art: ReactNode }[] = [
    { name: "Ćelija", art: <Icon size={20}>{cellSettings}</Icon> },
    { name: "Tabela", art: <Icon size={20}>{tableGrid}</Icon> },
    { name: "Oblik", art: <Icon size={19}>{shape}</Icon> },
    { name: "Slika", art: <Icon size={19}>{image}</Icon> },
    { name: "Grafikon", art: <Icon size={19}>{bars}</Icon> },
    { name: "Pasus", art: <Icon size={19}>{paragraph}</Icon> },
    { name: "Tekst umetnost", art: <TextArt small /> },
    { name: "Pivot tabela", art: <Icon size={19}>{pivot}</Icon> },
    { name: "Sekač", art: <Icon size={20}>{slicer}</Icon> },
    { name: "Potpis", art: <Icon size={21}>{signature}</Icon> },
];

const RightStrip = () => (
    <aside className="w-[50px] shrink-0 border-l border-[#cbcbcb] bg-[#f0f0f0] pt-[18px]">
        <div className="flex h-[466px] flex-col justify-between">
            {stripItems.map((item, i) => (
                <button
                    key={item.name}
                    aria-label={item.name}
                    className={`flex h-[38px] items-center justify-center ${
                        i === 0 ? "text-[#333]" : i === 1 ? "bg-[#7d858c] text-white" : "text-[#a0a0a0]"
                    }`}
                >
                    {item.art}
                </button>
            ))}
        </div>
    </aside>
);

/* ---------- status bar ---------- */

const StatusBar = () => (
    <footer>
        <div className="relative flex h-[29px] items-stretch justify-between border-t border-[#cbcbcb] bg-[#f0f0f0] text-[14px] text-[#444]">
            <div className="flex">
                <div className="flex w-[86px] items-center justify-center gap-[17px] border-r border-[#cbcbcb] pt-[2px] text-[#888]">
                    <button aria-label="Prethodni list"><Icon size={13}><path d="M20 1L6 14l14 13" /></Icon></button>
                    <button aria-label="Sledeći list"><Icon size={13}><path d="M8 1l14 13L8 27" /></Icon></button>
                </div>
                <div className="flex w-[75px] items-center gap-[15px] border-r border-[#cbcbcb] pl-4 pt-[2px]">
                    <button aria-label="Dodaj list"><Icon size={14}><path d="M14 0v28M0 14h28" strokeWidth="1.300" /></Icon></button>
                    <button aria-label="Lista listova"><Icon size={14}><path d="M1 2h26M1 10h26M1 18h26M1 26h26" /></Icon></button>
                </div>
                <button className="-mt-px border-r border-t-[5px] border-r-[#cbcbcb] border-t-[#49795d] bg-white px-3 font-bold leading-5">
                    Personal Monthly Budget
                </button>
                <button className="border-r border-[#cbcbcb] px-4 text-[#a5a5a5]">Data from csv</button>
            </div>
            <div className="flex items-center gap-4 pr-[56px] pt-[2px]">
                <button aria-label="Umanji prikaz"><Icon size={13}><path d="M0 14h28" /></Icon></button>
                <span className="font-bold">Zumiraj 100%</span>
                <button aria-label="Uvećaj prikaz"><Icon size={13}><path d="M14 0v28M0 14h28" /></Icon></button>
            </div>
            <span className="pointer-events-none absolute bottom-[2px] right-4 font-['Liberation_Sans','Noto_Sans_CJK_SC',sans-serif] text-[19px] leading-7 text-[#777]/75 [text-shadow:1px_1px_0_#fff]">
                CSDN @小李很执着
            </span>
        </div>
        <div className="h-[2px] bg-[#26292b] pl-[60px]">
            <div className="h-full w-[360px] bg-[#e4e4e4]" />
        </div>
    </footer>
);

/* ---------- dialog ---------- */

const axis = ["$7,000.00", "$6,000.00", "$5,000.00", "$4,000.00", "$3,000.00", "$2,000.00", "$1,000.00", "$-"];
const gridY = [59, 87, 116, 144, 173, 201, 230, 259];

const ChartPreview = () => (
    <svg width="537" height="321" viewBox="0 0 535 319" className={`ml-1 border border-[#cbcbcb] bg-white ${CELL_FONT}`} role="img" aria-label="Grafikon Naslov">
        <text x="268" y="29" textAnchor="middle" fontSize="18" fill="#595959">Grafikon Naslov</text>
        {axis.map((label, i) => (
            <g key={label}>
                <text x="72" y={gridY[i] + 5} textAnchor="end" fontSize="12" fill="#595959">{label}</text>
                <rect x="84" y={gridY[i]} width="436" height="1" fill="#d9d9d9" />
            </g>
        ))}
        <rect x="234" y="71" width="136" height="188" fill="#4f81bd" />
        <text x="302" y="286" textAnchor="middle" fontSize="12" fill="#595959">1</text>
        <rect x="243" y="300" width="8" height="8" fill="#4f81bd" />
        <text x="255" y="309" fontSize="12" fill="#595959">Serije 1</text>
    </svg>
);

const InsertChartDialog = () => {
    const [section, setSection] = useState("Preporučeno");
    const [variant, setVariant] = useState("Grupisana kolona");

    return (
        <div className="fixed inset-0 z-20 flex items-center justify-center pl-[2px] pt-[38px]">
            <div
                role="dialog"
                aria-label="Ubaci grafikon"
                className="w-[803px] overflow-hidden rounded-[5px] border border-[#cbcbcb] bg-white text-[14px] text-[#444] shadow-[0_5px_20px_rgba(0,0,0,0.3)]"
            >
                <div className="relative flex h-[43px] items-center justify-center border-b border-[#cbcbcb] bg-[#f0f0f0] pt-[2px] font-bold">
                    Ubaci grafikon
                    <button aria-label="Zatvori" className="absolute right-4 top-[14px] text-[#777]">
                        <Icon size={14}><path d="M1 1l26 26M27 1L1 27" /></Icon>
                    </button>
                </div>
                <div className="flex h-[501px] border-b border-[#cbcbcb]">
                    <div className="w-[201px] border-r border-[#cbcbcb] pt-[2px]">
                        <div className="flex h-[395px] flex-col">
                            {Object.entries(navIcons).map(([name, art]) => (
                                <button
                                    key={name}
                                    onClick={() => setSection(name)}
                                    className={`flex flex-1 items-center gap-2 pl-[13px] font-bold leading-4 ${
                                        name === section ? "bg-[#7d858c] text-white" : ""
                                    }`}
                                >
                                    <Icon size={20} box={20}>{art}</Icon>
                                    {name}
                                </button>
                            ))}
                        </div>
                    </div>
                    <div className="px-6 pt-[15px]">
                        <div className="flex gap-[7px]">
                            {variantGroups.map((group, i) => (
                                <div key={i} className="flex gap-[6px]">
                                    {group.map((v) => (
                                        <button
                                            key={v.name}
                                            aria-label={v.name}
                                            onClick={() => setVariant(v.name)}
                                            className={`size-[50px] overflow-hidden rounded-[2px] ${
                                                v.name === variant ? "bg-[#7d858c]" : "shadow-[inset_0_0_0_1px_#cbcbcb]"
                                            }`}
                                        >
                                            <svg width="50" height="50" viewBox="0 0 50 50" aria-hidden="true">{v.art}</svg>
                                        </button>
                                    ))}
                                </div>
                            ))}
                        </div>
                        <div className="mb-[6px] mt-[21px] font-bold leading-4">{variant}</div>
                        <ChartPreview />
                    </div>
                </div>
                <div className="flex h-[64px] justify-center gap-3 pt-4">
                    <button className="h-[29px] w-[108px] rounded-[1px] bg-[#7d858c] font-bold text-white">OK</button>
                    <button className="h-[29px] w-[108px] rounded-[1px] border border-[#cbcbcb] font-bold">Otkaži</button>
                </div>
            </div>
        </div>
    );
};

const App = () => (
    <div className={`flex h-screen flex-col overflow-hidden bg-[#f0f0f0] ${UI_FONT}`}>
        <TitleBar />
        <MenuBar />
        <Ribbon />
        <div className="flex min-h-0 flex-1">
            <LeftBar />
            <SheetArea />
            <TablePanel />
            <RightStrip />
        </div>
        <StatusBar />
        <InsertChartDialog />
    </div>
);

export default App;
